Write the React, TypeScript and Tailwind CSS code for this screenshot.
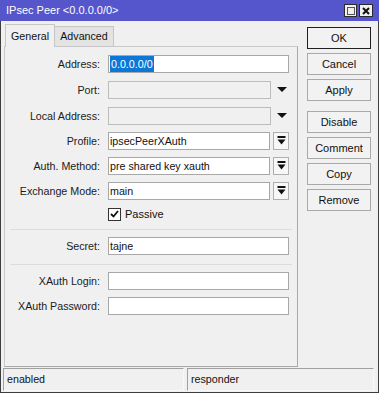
import React from "react";

const font = { fontFamily: '"Liberation Sans", Arial, sans-serif' };

function ArrowDown() {
  return (
    <svg width="10" height="6" viewBox="0 0 10 6" aria-hidden="true">
      <polygon points="0,0 10,0 5,5" fill="#111" />
    </svg>
  );
}

function BarArrow() {
  return (
    <svg width="9" height="10" viewBox="0 0 9 10" aria-hidden="true">
      <rect x="0.5" y="0" width="8" height="2" fill="#111" />
      <polygon points="0.5,3.5 8.5,3.5 4.5,8.5" fill="#111" />
    </svg>
  );
}

function Row({
  label,
  top,
  children,
}: {
  label: string;
  top: string;
  children: React.ReactNode;
}) {
  return (
    <div className={`flex items-center h-[18px] ${top}`}>
      <div className="w-[96px] text-right pr-[1px] text-[#1b1b1b] whitespace-nowrap">
        {label}
      </div>
      <div className="ml-[7px] flex items-center">{children}</div>
    </div>
  );
}

function TextBox({ value, w = "w-[181px]" }: { value?: string; w?: string }) {
  return (
    <div
      className={`${w} h-[18px] bg-white border border-[#a8a8a8] flex items-center pl-[1px] text-[#111] whitespace-nowrap overflow-hidden`}
    >
      {value}
    </div>
  );
}

function ComboBox({ value }: { value: string }) {
  return (
    <div className="flex items-center">
      <TextBox value={value} w="w-[162px]" />
      <div className="ml-[3px] w-[16px] h-[18px] bg-[#f7f7f7] border border-[#b0b0b0] flex items-center justify-center">
        <BarArrow />
      </div>
    </div>
  );
}

function DisabledDrop() {
  return (
    <div className="flex items-center">
      <div className="w-[163px] h-[18px] bg-[#f0f0f0] border border-[#bcbcbc]" />
      <div className="w-[18px] flex justify-end pr-[2px]">
        <ArrowDown />
      </div>
    </div>
  );
}

function Btn({ label, def, top }: { label: string; def?: boolean; top: string }) {
  return (
    <div
      className={`${top} w-[64px] h-[22px] flex items-center justify-center bg-[#f2f2f2] text-[#111] text-[11px] border ${
        def ? "border-[#202020]" : "border-[#a9a9a9]"
      }`}
    >
      {label}
    </div>
  );
}

export default function App() {
  return (
    <div
      className="w-[379px] h-[393px] flex flex-col bg-[#f0f0f0] text-[10.7px] select-none"
      style={font}
    >
      {/* title bar */}
      <div className="h-[21px] bg-[#5656cc] flex items-center pl-[6px] pr-[6px] text-white">
        <span className="text-[11px]">IPsec Peer &lt;0.0.0.0/0&gt;</span>
        <div className="ml-auto flex items-center gap-[2px]">
          <div className="w-[13px] h-[13px] bg-[#f0f0f0] border border-[#2a2a2a] flex items-center justify-center">
            <div className="w-[8px] h-[8px] border border-[#555]" />
          </div>
          <div className="w-[14px] h-[13px] bg-[#f0f0f0] border border-[#2a2a2a] flex items-center justify-center">
            <svg width="8" height="8" viewBox="0 0 8 8" aria-hidden="true">
              <path d="M1 1 L7 7 M7 1 L1 7" stroke="#111" strokeWidth="2" />
            </svg>
          </div>
        </div>
      </div>

      <div className="flex-1 flex flex-col border-x border-b border-[#3e3e3e]">
        <div className="flex">
          {/* left: tabs + panel */}
          <div className="ml-[3px] w-[294px] pt-[3px]">
            <div className="flex items-end h-[22px] pl-[1px]">
              <div className="relative z-10 -mb-px w-[50px] h-[23px] bg-[#f0f0f0] border-t border-l border-r border-[#c6c6c6] flex items-center justify-center text-[#111]">
                General
              </div>
              <div className="w-[59px] h-[20px] bg-[#e3e3e3] border-t border-r border-[#c6c6c6] flex items-center justify-center text-[#111]">
                Advanced
              </div>
            </div>
            <div className="h-[321px] border border-[#c9c9c9] border-r-[#a8a8a8] border-b-[#a8a8a8] pt-[8px]">
              <Row label="Address:" top="">
                <div className="w-[181px] h-[18px] bg-white border border-[#a8a8a8] flex items-center pl-[1px]">
                  <span className="bg-[#0b78d7] text-white h-[16px] leading-[16px] px-px">
                    0.0.0.0/0
                  </span>
                </div>
              </Row>
              <Row label="Port:" top="mt-[8px]">
                <DisabledDrop />
              </Row>
              <Row label="Local Address:" top="mt-[8px]">
                <DisabledDrop />
              </Row>
              <Row label="Profile:" top="mt-[7px]">
                <ComboBox value="ipsecPeerXAuth" />
              </Row>
              <Row label="Auth. Method:" top="mt-[7px]">
                <ComboBox value="pre shared key xauth" />
              </Row>
              <Row label="Exchange Mode:" top="mt-[7px]">
                <ComboBox value="main" />
              </Row>
              <div className="mt-[7px] h-[14px] flex items-center pl-[103px]">
                <div className="w-[13px] h-[13px] bg-white border border-[#333] flex items-center justify-center">
                  <svg width="9" height="8" viewBox="0 0 9 8" aria-hidden="true">
                    <path
                      d="M1 4 L3.5 6.5 L8 1"
                      stroke="#111"
                      strokeWidth="1.8"
                      fill="none"
                    />
                  </svg>
                </div>
                <span className="ml-[4px] text-[#111] text-[11px]">Passive</span>
              </div>
              <div className="mt-[8px] mx-[5px] h-px bg-[#dcdcdc]" />
              <Row label="Secret:" top="mt-[7px]">
                <TextBox value="tajne" />
              </Row>
              <div className="mt-[9px] mx-[5px] h-px bg-[#dcdcdc]" />
              <Row label="XAuth Login:" top="mt-[7px]">
                <TextBox />
              </Row>
              <Row label="XAuth Password:" top="mt-[7px]">
                <TextBox />
              </Row>
            </div>
          </div>

          {/* right: buttons */}
          <div className="ml-[9px] flex flex-col pt-[6px]">
            <Btn label="OK" def top="" />
            <Btn label="Cancel" top="mt-[4px]" />
            <Btn label="Apply" top="mt-[4px]" />
            <Btn label="Disable" top="mt-[10px]" />
            <Btn label="Comment" top="mt-[4px]" />
            <Btn label="Copy" top="mt-[4px]" />
            <Btn label="Remove" top="mt-[4px]" />
          </div>
        </div>

        {/* status bar */}
        <div className="flex-1 flex items-end pl-[2px] pr-[4px] pb-[1px] gap-[3px]">
          <div className="w-[181px] h-[23px] border-t border-l border-[#a0a0a0] border-b border-r border-b-[#f8f8f8] border-r-[#f8f8f8] flex items-center pl-[3px] text-[#111]">
            enabled
          </div>
          <div className="flex-1 h-[23px] border-t border-l border-[#a0a0a0] border-b border-r border-b-[#f8f8f8] border-r-[#f8f8f8] flex items-center pl-[3px] text-[#111]">
            responder
          </div>
        </div>
      </div>
    </div>
  );
}
